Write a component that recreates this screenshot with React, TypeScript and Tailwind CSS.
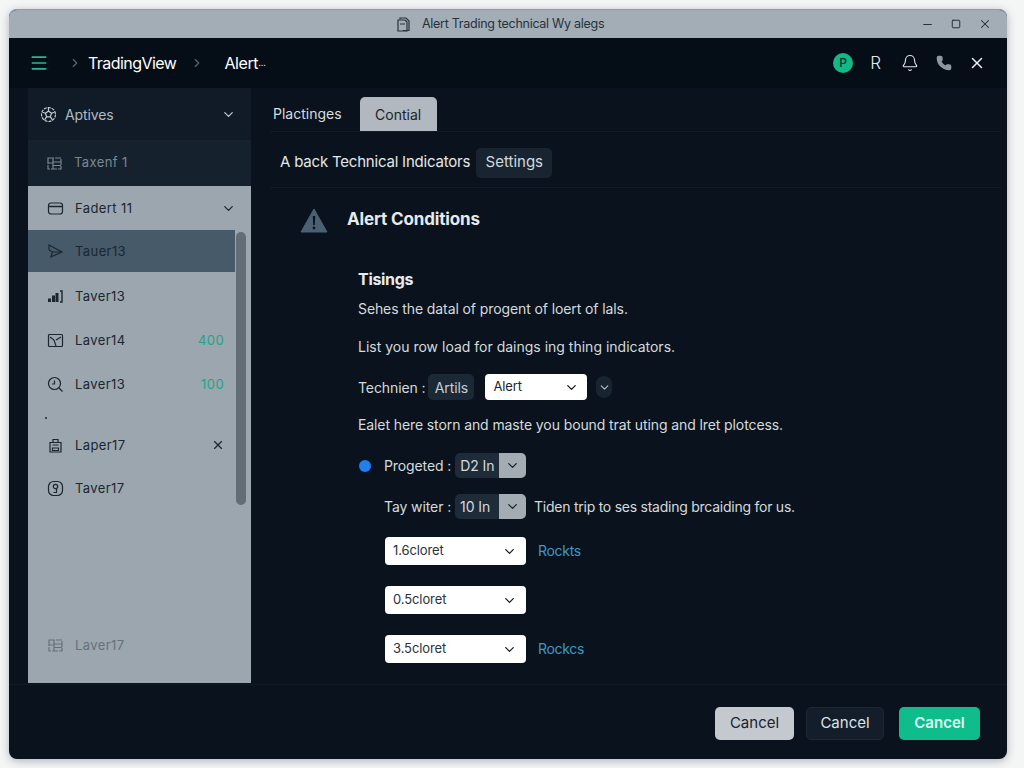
import React from 'react';
import { Bell, ChevronDown, ChevronRight, Menu, Minus, Phone, Square, X } from 'lucide-react';

type IconProps = { className?: string };

const Svg = ({ children, className }: IconProps & { children: React.ReactNode }) => (
  <svg width="17" height="17" viewBox="0 0 17 17" fill="none" stroke="currentColor" strokeWidth="1.2" className={className}>
    {children}
  </svg>
);

const TitleDoc = () => (
  <Svg>
    <path d="M5 3.5V2h6l3 3v9.5H8" />
    <path d="M3 4h7l2 2v9H3z" />
    <path d="M5 8h5" />
  </Svg>
);

const WheelIcon = () => (
  <Svg className="text-[#c3c9ce]">
    <circle cx="8.5" cy="8.5" r="7" strokeDasharray="3 1" />
    <path d="M8.5 5l3 2.2-1.1 3.6H6.6L5.5 7.2z" />
    <path d="M8.5 5V1.5M11.5 7.2l3-1M10.4 10.8l2 3M6.6 10.8l-2 3M5.5 7.2l-3-1" />
  </Svg>
);

const PanelIcon = () => (
  <Svg>
    <path d="M2 3h13v11H2z" strokeDasharray="6 1" />
    <path d="M7 3v11M7 7h8M7 10.5h8M2 8h5" />
  </Svg>
);

const CardIcon = () => (
  <Svg>
    <rect x="1.5" y="3" width="14" height="11" rx="2.5" />
    <path d="M2 6.5h13" strokeWidth="1.6" />
  </Svg>
);

const PlaneIcon = () => (
  <Svg>
    <path d="M2 2l13 7-11 5 1.5-5L2 7z" />
    <path d="M5.5 9H15" />
  </Svg>
);

const BarsIcon = () => (
  <Svg>
    <path d="M2.5 14v-3.5M6.5 14V7.5M10 14V5" strokeWidth="3" />
    <path d="M13 3h2v11h-2" strokeWidth="1.4" />
  </Svg>
);

const ChartBoxIcon = () => (
  <Svg>
    <rect x="1.5" y="2.5" width="14" height="12" rx="1" />
    <path d="M3 5l4 3 2 6M9 8l5-3" />
  </Svg>
);

const ClockSearchIcon = () => (
  <Svg>
    <circle cx="7.5" cy="7.5" r="6" />
    <path d="M7.5 4.5v3.5H5M12 12l3.5 3.5" />
  </Svg>
);

const BagIcon = () => (
  <Svg>
    <path d="M3 5.5h11V15H3z" />
    <path d="M6 5.5V2.5h5v3M5.5 8h6M5.5 11h6v2.5h-6z" />
  </Svg>
);

const RoundBoxIcon = () => (
  <Svg>
    <rect x="1.5" y="1.5" width="14" height="14" rx="5" />
    <circle cx="8.5" cy="6.5" r="2.2" />
    <path d="M9.5 9v3.5H6.5" />
  </Svg>
);

const rows = [
  { label: 'Taver13', icon: <BarsIcon /> },
  { label: 'Laver14', icon: <ChartBoxIcon />, value: '400' },
  { label: 'Laver13', icon: <ClockSearchIcon />, value: '100' },
];

const NumberSelect = ({ value }: { value: string }) => (
  <div className="flex h-[25px] w-[71px] overflow-hidden rounded-[5px] bg-[#1e2c3a]">
    <span className="flex-1 pl-[5px] text-[14px] leading-[25px] text-[#d3d9de]">{value}</span>
    <span className="flex w-[27px] items-center justify-center bg-[#a3abb3] text-[#16202b]">
      <ChevronDown size={15} />
    </span>
  </div>
);

const WhiteSelect = ({ value, note }: { value: string; note?: string }) => (
  <div className="flex h-[28px] items-center gap-3">
    <div className="flex h-[28px] w-[141px] items-center justify-between rounded-[4px] bg-white pl-2 pr-[9px] text-[13px] text-[#2a323b]">
      {value}
      <ChevronDown size={15} className="text-[#111820]" />
    </div>
    {note && <span className="mb-[2px] text-[14px] tracking-[-0.3px] text-[#3f97c4]">{note}</span>}
  </div>
);

export default function App() {
  return (
    <div className="h-[768px] w-[1024px] overflow-hidden bg-[#f4f5f5] pl-[9px] pt-[9px] font-['Inter',sans-serif]">
      <div className="flex h-[750px] w-[998px] flex-col overflow-hidden rounded-[8px] border-t border-[#7f9fba] bg-[#0a131d] shadow-[0_2px_8px_rgba(40,60,80,0.35)]">
        {/* title bar */}
        <div className="flex h-[28px] shrink-0 items-center bg-[#a3adb6] pr-[15px] text-[#27313b]">
          <div className="ml-[386px] flex items-center gap-[10px] text-[12.5px] tracking-[-0.28px]">
            <TitleDoc />
            <span>Alert Trading technical Wy alegs</span>
          </div>
          <div className="ml-auto flex items-center gap-[17px]">
            <Minus size={13} strokeWidth={2.2} />
            <Square size={10} strokeWidth={2.4} />
            <X size={14} strokeWidth={1.8} />
          </div>
        </div>

        {/* app header */}
        <div className="flex h-[50px] shrink-0 items-center bg-[#050d17] pl-[20px] pr-[21px] text-white">
          <Menu size={20} className="text-[#2bb594]" />
          <ChevronRight size={14} className="ml-[19px] text-[#5c6670]" />
          <span className="ml-[6px] text-[16px] font-normal tracking-[-0.55px]">TradingView</span>
          <ChevronRight size={14} className="ml-[14px] text-[#5c6670]" />
          <span className="ml-[20px] text-[16px] font-normal tracking-[-0.4px]">Alert</span>
          <span className="text-[9px] text-[#d9dde0]">...</span>
          <div className="ml-auto flex items-center">
            <span className="flex h-[20px] w-[20px] items-center justify-center rounded-full bg-[#12b886] text-[12px] font-medium text-[#062b25]">
              P
            </span>
            <span className="ml-[17px] text-[17px] font-light leading-none text-[#e5e8ea]">R</span>
            <Bell size={18} strokeWidth={1.5} className="ml-[20px] text-[#e2e6e9]" />
            <Phone size={16} className="ml-[17px] fill-[#8d979f] text-[#8d979f]" />
            <X size={18} className="ml-[16px] text-[#eef1f3]" />
          </div>
        </div>

        <div className="flex min-h-0 flex-1">
          {/* sidebar */}
          <div className="ml-[19px] flex h-[595px] w-[223px] shrink-0 flex-col">
            <div className="flex h-[52px] items-center bg-[#101b27] pl-[12px] pr-[15px] text-[14px] text-[#b2bac1]">
              <WheelIcon />
              <span className="ml-[8px] tracking-[-0.1px]">Aptives</span>
              <ChevronDown size={15} className="ml-auto text-[#c3c9ce]" />
            </div>
            <div className="flex h-[46px] items-center bg-[#15222e] pl-[18px] text-[13px] tracking-[0.4px] text-[#7c8790]">
              <PanelIcon />
              <span className="ml-[11px]">Taxenf 1</span>
            </div>

            <div className="relative flex flex-1 flex-col bg-[#9ba6af] text-[13px] tracking-[0.4px] text-[#1c2630]">
              <div className="flex h-[44px] items-center pl-[19px] pr-[15px]">
                <CardIcon />
                <span className="ml-[11px] pt-[2px]">Fadert 11</span>
                <ChevronDown size={15} className="ml-auto" />
              </div>
              <div className="flex h-[42px] w-[207px] items-center bg-[#465a6a] pl-[19px] text-[#1b2631]">
                <PlaneIcon />
                <span className="ml-[11px] pt-[2px]">Tauer13</span>
              </div>
              <div className="h-[2px]" />
              {rows.map(({ label, icon, value }) => (
                <div key={label + value} className="flex h-[44px] items-center pl-[19px] pr-[27px]">
                  {icon}
                  <span className="ml-[11px] pt-[2px]">{label}</span>
                  {value && <span className="ml-auto pt-[2px] text-[#1fa585]">{value}</span>}
                </div>
              ))}
              <div className="h-[17px] pl-[17px] pt-[11px]">
                <div className="h-[2px] w-[2px] bg-[#3c4853]" />
              </div>
              <div className="flex h-[44px] items-center pl-[19px] pr-[26px]">
                <BagIcon />
                <span className="ml-[11px] pt-[2px]">Laper17</span>
                <X size={14} className="ml-auto" />
              </div>
              <div className="flex h-[43px] items-center pl-[19px]">
                <RoundBoxIcon />
                <span className="ml-[11px]">Taver17</span>
              </div>
              <div className="mt-auto mb-[16px] flex h-[44px] items-center pl-[19px] text-[#66717b]">
                <PanelIcon />
                <span className="ml-[11px] pt-[2px]">Laver17</span>
              </div>
              <div className="absolute left-[208px] top-[46px] h-[273px] w-[10px] rounded-full bg-[#626d76]" />
            </div>
          </div>

          {/* main panel */}
          <div className="flex min-w-0 flex-1 flex-col">
            <div className="ml-[19px] mr-[6px] flex h-[44px] items-end border-b border-[#121c27]">
              <span className="mb-[7px] ml-[3px] text-[14px] text-[#d7dcdf]">Plactinges</span>
              <span className="ml-[18px] flex h-[34px] w-[77px] items-center justify-center rounded-t-[5px] bg-[#b1b8bf] text-[14px] text-[#1a232c]">
                Contial
              </span>
            </div>
            <div className="ml-[19px] mr-[6px] flex h-[56px] items-center border-b border-[#121c27] pl-[10px] pt-[6px]">
              <span className="text-[15px] tracking-[-0.2px] text-[#e3e7e9]">A back Technical Indicators</span>
              <span className="ml-[6px] flex h-[30px] w-[76px] items-center justify-center rounded-[5px] bg-[#182531] text-[15px] text-[#d3d9dd]">
                Settings
              </span>
            </div>

            <div className="flex items-center pl-[49px] pt-[18px]">
              <svg width="28" height="28" viewBox="0 0 28 28">
                <path d="M14 3L27 26H1z" fill="#4c6074" stroke="#4c6074" strokeLinejoin="round" />
                <path d="M12.8 10h2.4l-.4 9h-1.6z" fill="#0a131d" />
                <circle cx="14" cy="22" r="1.4" fill="#0a131d" />
              </svg>
              <span className="ml-[19px] text-[17px] font-bold tracking-[-0.15px] text-[#e6eaec]">Alert Conditions</span>
            </div>

            <div className="flex flex-col pl-[107px] text-[14px] tracking-[-0.1px] text-[#d5dadd]">
              <div className="mt-[35px] text-[16px] font-bold leading-[20px] tracking-[-0.3px] text-[#e8ecee]">Tisings</div>
              <div className="mt-[10px] leading-[20px]">Sehes the datal of progent of loert of lals.</div>
              <div className="mt-[18px] leading-[20px] tracking-[0px]">List you row load for daings ing thing indicators.</div>

              <div className="mt-[17px] flex h-[26px] items-center">
                <span>Technien :</span>
                <span className="ml-[3px] flex h-[26px] w-[46px] items-center justify-center rounded-[5px] bg-[#1b2936] text-[#c7ced3]">
                  Artils
                </span>
                <span className="ml-[11px] flex h-[26px] w-[102px] items-center justify-between rounded-[4px] bg-white pl-[8px] pr-[8px] text-[13px] text-[#1c242c]">
                  Alert
                  <ChevronDown size={15} className="text-[#111820]" />
                </span>
                <span className="ml-[9px] flex h-[22px] w-[16px] items-center justify-center rounded-full bg-[#182531] text-[#b8c0c6]">
                  <ChevronDown size={13} />
                </span>
              </div>

              <div className="mt-[15px] leading-[20px]">Ealet here storn and maste you bound trat uting and lret plotcess.</div>

              <div className="mt-[18px] flex h-[25px] items-center">
                <span className="ml-[1px] h-[12px] w-[12px] rounded-full bg-[#1f80ee]" />
                <span className="ml-[13px] mr-[4px]">Progeted :</span>
                <NumberSelect value="D2 In" />
              </div>

              <div className="mt-[16px] flex h-[25px] items-center pl-[26px]">
                <span className="mr-[4px]">Tay witer :</span>
                <NumberSelect value="10 In" />
                <span className="ml-[8px] tracking-[-0.25px]">Tiden trip to ses stading brcaiding for us.</span>
              </div>

              <div className="ml-[27px] mt-[18px] flex flex-col gap-[21px]">
                <WhiteSelect value="1.6cloret" note="Rockts" />
                <WhiteSelect value="0.5cloret" />
                <WhiteSelect value="3.5cloret" note="Rockcs" />
              </div>
            </div>
          </div>
        </div>

        {/* footer */}
        <div className="flex h-[75px] shrink-0 items-start justify-end border-t border-[#101a24] pr-[27px] pt-[22px] text-[15px]">
          <button className="h-[33px] w-[79px] rounded-[5px] bg-[#c4c9d0] text-[#1a222b]">Cancel</button>
          <button className="ml-[12px] h-[33px] w-[78px] rounded-[5px] border border-[#1c2835] bg-[#141e2a] text-[#dfe3e6]">Cancel</button>
          <button className="ml-[15px] h-[33px] w-[81px] rounded-[5px] bg-[#0fbd8c] font-semibold text-[#dffaf1]">Cancel</button>
        </div>
      </div>
    </div>
  );
}
